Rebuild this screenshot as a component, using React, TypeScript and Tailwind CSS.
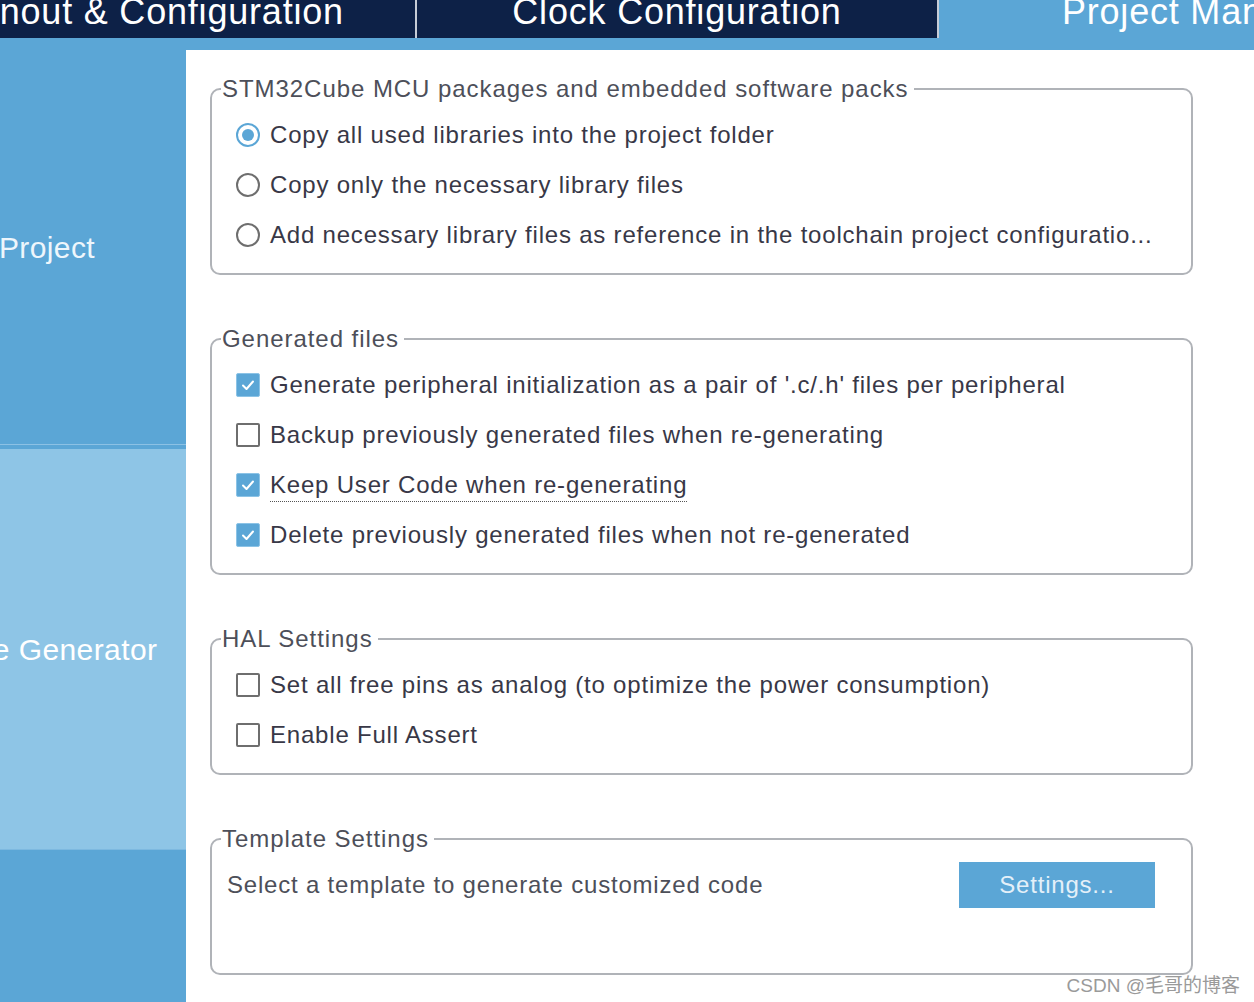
import React from 'react';

const NAVY = 'bg-[#0d2147]';

function Tab({ label, active, last }: { label: string; active?: boolean; last?: boolean }) {
  return (
    <div
      className={
        'w-[522px] shrink-0 h-[38px] flex justify-center overflow-visible ' +
        (active ? 'bg-[#5ba6d6]' : NAVY + ' ' + (last ? '' : 'border-r-2 border-[#c6ccd6]'))
      }
    >
      <span className="-mt-[6px] leading-[36px] text-[36px] tracking-[0.8px] text-white whitespace-nowrap">
        {label}
      </span>
    </div>
  );
}

function TopBar() {
  return (
    <div className="h-[38px] overflow-hidden flex">
      <div className="flex -ml-[105px]">
        <Tab label="Pinout & Configuration" />
        <Tab label="Clock Configuration" />
        <Tab label="Project Manager" active />
      </div>
    </div>
  );
}

function Sidebar() {
  return (
    <div className="w-[186px] shrink-0 overflow-hidden flex flex-col">
      <div className="-ml-[92px] w-[278px] flex flex-col h-full">
        <div className="h-[394px] bg-[#5ba6d6] flex items-center justify-center text-[30px] tracking-[0.4px] text-[#eef6fc]">
          Project
        </div>
        <div className="h-[1px] bg-[#8cc1e4]" />
        <div className="h-[4px] bg-[#5ba6d6]" />
        <div className="h-[400px] bg-[#8ec5e6] flex items-center justify-center text-[30px] tracking-[0.4px] text-white">
          Code Generator
        </div>
        <div className="h-[1px] bg-[#7db9e0]" />
        <div className="flex-1 bg-[#5ba6d6]" />
      </div>
    </div>
  );
}

function Radio({ checked }: { checked?: boolean }) {
  return checked ? (
    <span className="w-[24px] h-[24px] rounded-full border-2 border-[#5ba6d6] bg-white flex items-center justify-center shrink-0">
      <span className="w-[12px] h-[12px] rounded-full bg-[#5ba6d6]" />
    </span>
  ) : (
    <span className="w-[24px] h-[24px] rounded-full border-2 border-[#6e6e6e] bg-white shrink-0" />
  );
}

function Check({ checked }: { checked?: boolean }) {
  return checked ? (
    <span className="w-[24px] h-[24px] rounded-[2px] bg-[#5ba6d6] border border-[#8cc3e6] flex items-center justify-center shrink-0">
      <svg width="16" height="16" viewBox="0 0 16 16" fill="none">
        <path d="M3 8.5 L6.5 12 L13 4.5" stroke="white" strokeWidth="2" strokeLinecap="round" strokeLinejoin="round" />
      </svg>
    </span>
  ) : (
    <span className="w-[24px] h-[24px] rounded-[2px] border-2 border-[#6e6e6e] bg-white shrink-0" />
  );
}

function Row({ control, children }: { control: React.ReactNode; children: React.ReactNode }) {
  return (
    <div className="h-[50px] flex items-center pl-[24px] gap-[10px] text-[24px] tracking-[0.8px] text-[#383847] whitespace-nowrap">
      {control}
      <span>{children}</span>
    </div>
  );
}

function Group({ title, children, className }: { title: string; children: React.ReactNode; className?: string }) {
  return (
    <fieldset className={'w-[983px] -ml-[1px] border-2 border-[#b0b3b8] rounded-[10px] ' + (className || '')}>
      <legend className="ml-[9px] pl-[1px] pr-[5px] text-[24px] leading-[28px] tracking-[0.95px] text-[#4d4f59] whitespace-nowrap">
        {title}
      </legend>
      {children}
    </fieldset>
  );
}

function Content() {
  return (
    <div className="flex-1 bg-white pl-[25px] pt-[25px] flex flex-col gap-[50px]">
      <Group title="STM32Cube MCU packages and embedded software packs" className="pt-[7px] pb-[13px]">
        <Row control={<Radio checked />}>Copy all used libraries into the project folder</Row>
        <Row control={<Radio />}>Copy only the necessary library files</Row>
        <Row control={<Radio />}>Add necessary library files as reference in the toolchain project configuratio...</Row>
      </Group>

      <Group title="Generated files" className="pt-[7px] pb-[13px]">
        <Row control={<Check checked />}>Generate peripheral initialization as a pair of '.c/.h' files per peripheral</Row>
        <Row control={<Check />}>Backup previously generated files when re-generating</Row>
        <Row control={<Check checked />}>
          <span className="border-b border-dotted border-[#555] pb-[3px]">Keep User Code when re-generating</span>
        </Row>
        <Row control={<Check checked />}>Delete previously generated files when not re-generated</Row>
      </Group>

      <Group title="HAL Settings" className="pt-[7px] pb-[13px]">
        <Row control={<Check />}>Set all free pins as analog (to optimize the power consumption)</Row>
        <Row control={<Check />}>Enable Full Assert</Row>
      </Group>

      <Group title="Template Settings" className="pt-[7px] pb-[63px]">
        <div className="h-[50px] flex items-center justify-between pl-[15px] pr-[36px]">
          <span className="text-[24px] tracking-[0.8px] text-[#4d4f59] whitespace-nowrap">
            Select a template to generate customized code
          </span>
          <button className="w-[196px] h-[46px] bg-[#5ba6d6] text-[24px] tracking-[0.8px] text-[#e4f0f9]">
            Settings...
          </button>
        </div>
      </Group>
    </div>
  );
}

export default function App() {
  return (
    <div className="relative w-[1254px] h-[1002px] overflow-hidden bg-white font-['Liberation_Sans',Arial,sans-serif]">
      <TopBar />
      <div className="h-[12px] bg-[#5ba6d6]" />
      <div className="flex h-[952px]">
        <Sidebar />
        <Content />
      </div>
      <div className="absolute right-[14px] bottom-[2px] text-[19px] text-[#9a9a9a] font-['Liberation_Sans','Noto_Sans_CJK_SC',sans-serif]">
        CSDN @毛哥的博客
      </div>
    </div>
  );
}
